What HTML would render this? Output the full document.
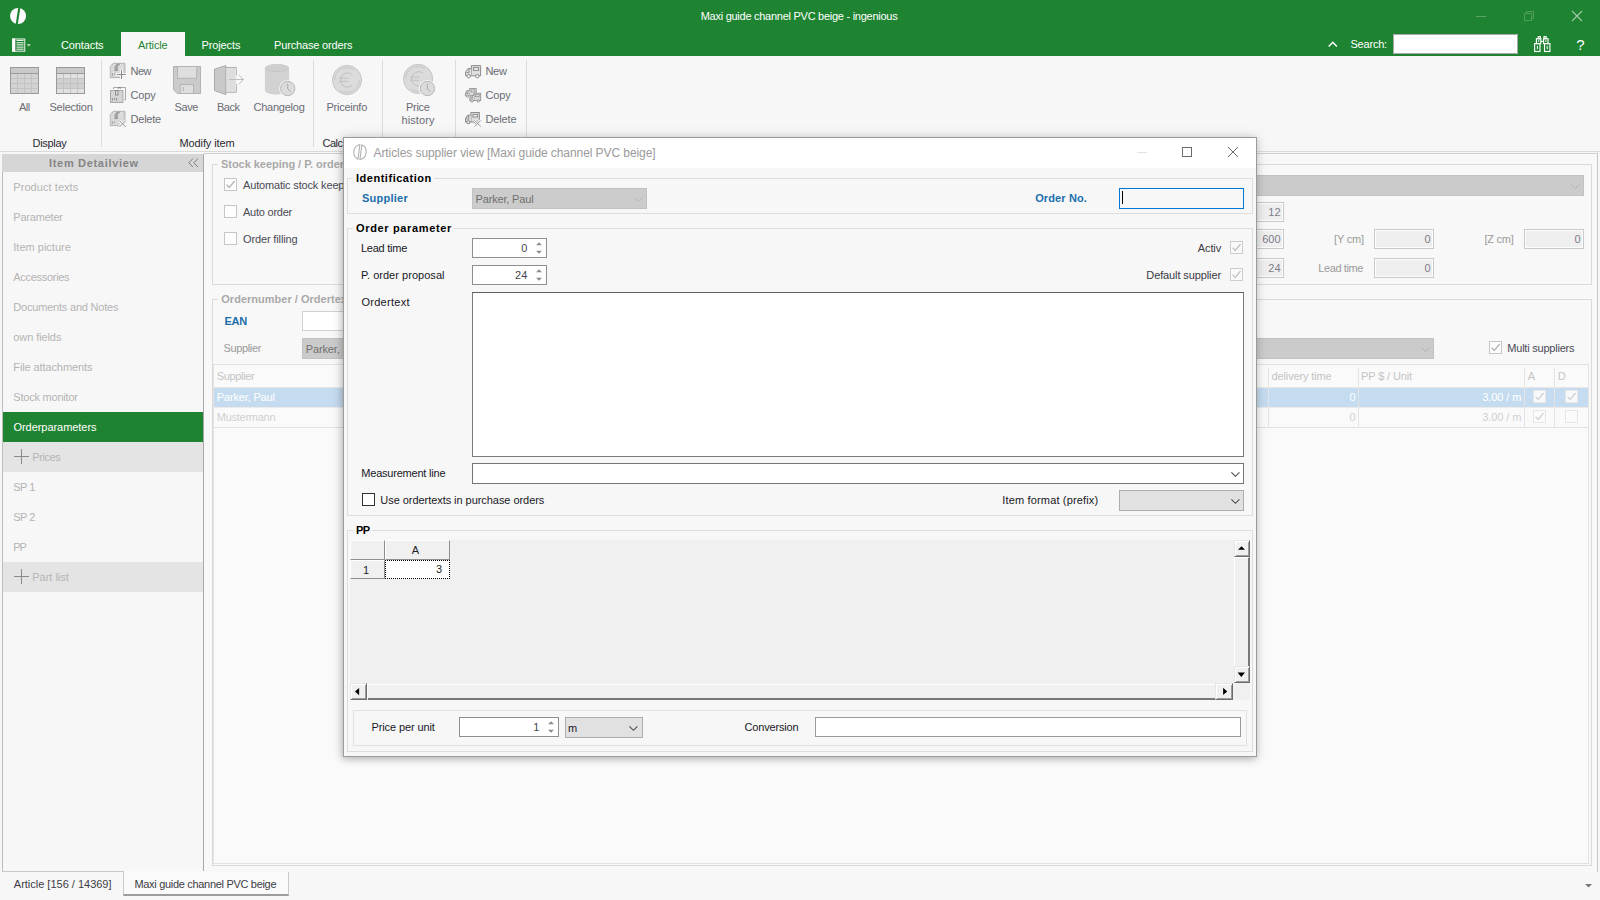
<!DOCTYPE html>
<html><head><meta charset="utf-8"><title>ingenious</title>
<style>
html,body{margin:0;padding:0;}
body{width:1600px;height:900px;overflow:hidden;position:relative;background:#f7f7f7;font-family:"Liberation Sans",sans-serif;font-size:11px;}
.a{position:absolute;box-sizing:border-box;}
.t{white-space:nowrap;}
svg{overflow:visible;}
</style></head><body>
<div class="a" style="left:0px;top:0px;width:1600px;height:56px;background:#1f8432;"></div>
<svg class="a" style="left:10px;top:8px;" width="16" height="16" viewBox="0 0 16 16"><ellipse cx="8.05" cy="8" rx="8" ry="8.05" fill="#fdfbfd"/><path d="M9.35 -0.6 L6.7 16.6" stroke="#1f8432" stroke-width="2.1"/></svg>
<div class="a t" style="left:700.70px;top:9.19px;line-height:14px;font-size:11px;color:#fff;letter-spacing:-0.265px;">Maxi guide channel PVC beige - ingenious</div>
<svg class="a" style="left:1476px;top:16px;" width="10" height="1" viewBox="0 0 10 1"><rect width="10" height="1" fill="#5aa468"/></svg>
<svg class="a" style="left:1524px;top:11px;" width="10" height="10" viewBox="0 0 10 10"><path d="M0.5 2.5h7v7h-7z M2.5 2.5v-2h7v7h-2" fill="none" stroke="#4f9e5e" stroke-width="1"/></svg>
<svg class="a" style="left:1572px;top:11px;" width="10" height="10" viewBox="0 0 10 10"><path d="M0 0L10 10M10 0L0 10" stroke="#9fcca8" stroke-width="1.1" fill="none"/></svg>
<svg class="a" style="left:12px;top:38px;" width="20" height="14" viewBox="0 0 20 14"><rect x="0.75" y="1" width="12" height="12.2" fill="none" stroke="#eef5ef" stroke-width="1"/><rect x="0.25" y="0.5" width="3.1" height="13.2" fill="#fff"/><path d="M3.9 1v12" stroke="#7d8f80" stroke-width="0.7"/><path d="M4.6 2.4h7M4.6 4.8h7M4.6 6.9h7M4.6 9.1h7M4.6 11.2h7" stroke="#fff" stroke-width="1"/><path d="M14.8 6.2h4l-2 2.2z" fill="#cfe5d3"/></svg>
<div class="a t" style="left:61.00px;top:38.19px;line-height:14px;font-size:11px;color:#fff;letter-spacing:-0.113px;">Contacts</div>
<div class="a" style="left:121px;top:32px;width:64px;height:24px;background:#f7f7f7;"></div>
<div class="a t" style="left:138.00px;top:38.19px;line-height:14px;font-size:11px;color:#1f8432;letter-spacing:-0.152px;">Article</div>
<div class="a t" style="left:201.50px;top:38.19px;line-height:14px;font-size:11px;color:#fff;letter-spacing:-0.117px;">Projects</div>
<div class="a t" style="left:274.00px;top:38.19px;line-height:14px;font-size:11px;color:#fff;letter-spacing:-0.160px;">Purchase orders</div>
<svg class="a" style="left:1328px;top:41px;" width="10" height="6" viewBox="0 0 10 6"><path d="M0.7 5.4L4.8 1.2L8.9 5.4" stroke="#fff" stroke-width="1.5" fill="none"/></svg>
<div class="a t" style="left:1350.40px;top:37.19px;line-height:14px;font-size:11px;color:#fff;letter-spacing:-0.187px;">Search:</div>
<div class="a" style="left:1393px;top:34px;width:125px;height:20px;background:#fff;border:1px solid #a9a9a9;"></div>
<svg class="a" style="left:1534px;top:36px;" width="17" height="16" viewBox="0 0 17 16"><g fill="none" stroke="#fff" stroke-width="1.15"><rect x="0.6" y="7.6" width="5.4" height="7.9"/><rect x="10.5" y="7.6" width="5.4" height="7.9"/><rect x="2.4" y="2.7" width="4.4" height="4.9"/><rect x="9.6" y="2.7" width="4.4" height="4.9"/><rect x="4.3" y="0.6" width="2.1" height="2.1"/><rect x="10" y="0.6" width="2.1" height="2.1"/><path d="M7 5.4h2.4"/><path d="M3.4 9.8v3.4M13.2 9.8v3.4M4.7 4.2v1.8M11.9 4.2v1.8" stroke-width="1"/></g></svg>
<div class="a t" style="left:1576.20px;top:35.80px;line-height:18px;font-size:15px;color:#fff;">?</div>
<div class="a" style="left:0px;top:56px;width:1600px;height:95px;background:#f7f7f7;"></div>
<div class="a" style="left:0px;top:151px;width:1600px;height:1px;background:#dadada;"></div>
<div class="a" style="left:101px;top:60px;width:1px;height:87px;background:#dcdcdc;"></div>
<div class="a" style="left:313px;top:60px;width:1px;height:87px;background:#dcdcdc;"></div>
<div class="a" style="left:382px;top:60px;width:1px;height:87px;background:#dcdcdc;"></div>
<div class="a" style="left:455px;top:60px;width:1px;height:87px;background:#dcdcdc;"></div>
<div class="a" style="left:526px;top:60px;width:1px;height:87px;background:#dcdcdc;"></div>
<div class="a t" style="left:19.00px;top:100.19px;line-height:14px;font-size:11px;color:#6b6b74;letter-spacing:-0.575px;">All</div>
<div class="a t" style="left:49.50px;top:100.19px;line-height:14px;font-size:11px;color:#6b6b74;letter-spacing:-0.250px;">Selection</div>
<div class="a t" style="left:130.50px;top:64.19px;line-height:14px;font-size:11px;color:#6b6b74;letter-spacing:-0.502px;">New</div>
<div class="a t" style="left:130.50px;top:88.19px;line-height:14px;font-size:11px;color:#6b6b74;letter-spacing:-0.170px;">Copy</div>
<div class="a t" style="left:130.50px;top:112.19px;line-height:14px;font-size:11px;color:#6b6b74;letter-spacing:-0.216px;">Delete</div>
<div class="a t" style="left:174.50px;top:100.19px;line-height:14px;font-size:11px;color:#6b6b74;letter-spacing:-0.393px;">Save</div>
<div class="a t" style="left:217.00px;top:100.19px;line-height:14px;font-size:11px;color:#6b6b74;letter-spacing:-0.489px;">Back</div>
<div class="a t" style="left:253.50px;top:100.19px;line-height:14px;font-size:11px;color:#6b6b74;letter-spacing:-0.245px;">Changelog</div>
<div class="a t" style="left:326.50px;top:100.19px;line-height:14px;font-size:11px;color:#6b6b74;letter-spacing:-0.255px;">Priceinfo</div>
<div class="a t" style="left:406.00px;top:100.19px;line-height:14px;font-size:11px;color:#6b6b74;letter-spacing:-0.312px;">Price</div>
<div class="a t" style="left:401.50px;top:113.19px;line-height:14px;font-size:11px;color:#6b6b74;letter-spacing:0.086px;">history</div>
<div class="a t" style="left:485.50px;top:64.19px;line-height:14px;font-size:11px;color:#6b6b74;letter-spacing:-0.335px;">New</div>
<div class="a t" style="left:485.50px;top:88.19px;line-height:14px;font-size:11px;color:#6b6b74;letter-spacing:-0.170px;">Copy</div>
<div class="a t" style="left:485.50px;top:112.19px;line-height:14px;font-size:11px;color:#6b6b74;letter-spacing:-0.133px;">Delete</div>
<div class="a t" style="left:32.50px;top:136.19px;line-height:14px;font-size:11px;color:#2b2b33;letter-spacing:-0.295px;">Display</div>
<div class="a t" style="left:179.50px;top:136.19px;line-height:14px;font-size:11px;color:#2b2b33;letter-spacing:-0.112px;">Modify item</div>
<div class="a t" style="left:322.50px;top:136.19px;line-height:14px;font-size:11px;color:#2b2b33;letter-spacing:-0.501px;">Calc</div>
<div class="a" style="left:2px;top:154px;width:202px;height:718px;background:#f7f7f7;border-left:1px solid #bdbdbd;border-right:1px solid #a8a8a8;"></div>
<div class="a" style="left:2px;top:154px;width:201px;height:18px;background:#d6d6d6;"></div>
<div class="a t" style="left:49.00px;top:156.19px;line-height:14px;font-size:11px;color:#858585;font-weight:bold;letter-spacing:0.682px;">Item Detailview</div>
<svg class="a" style="left:188px;top:158px;" width="11" height="10" viewBox="0 0 11 10"><path d="M5 0.5L0.8 4.8L5 9.1M10 0.5L5.8 4.8L10 9.1" stroke="#7d7d7d" stroke-width="1" fill="none"/></svg>
<div class="a t" style="left:13.30px;top:179.99px;line-height:14px;font-size:11px;color:#b4b4b4;letter-spacing:0.062px;">Product texts</div>
<div class="a t" style="left:13.30px;top:209.99px;line-height:14px;font-size:11px;color:#b4b4b4;letter-spacing:-0.205px;">Parameter</div>
<div class="a t" style="left:13.30px;top:239.99px;line-height:14px;font-size:11px;color:#b4b4b4;letter-spacing:0.003px;">Item picture</div>
<div class="a t" style="left:13.30px;top:269.99px;line-height:14px;font-size:11px;color:#b4b4b4;letter-spacing:-0.300px;">Accessories</div>
<div class="a t" style="left:13.30px;top:299.99px;line-height:14px;font-size:11px;color:#b4b4b4;letter-spacing:-0.201px;">Documents and Notes</div>
<div class="a t" style="left:13.30px;top:329.99px;line-height:14px;font-size:11px;color:#b4b4b4;letter-spacing:-0.091px;">own fields</div>
<div class="a t" style="left:13.30px;top:359.99px;line-height:14px;font-size:11px;color:#b4b4b4;letter-spacing:-0.106px;">File attachments</div>
<div class="a t" style="left:13.30px;top:389.99px;line-height:14px;font-size:11px;color:#b4b4b4;letter-spacing:-0.211px;">Stock monitor</div>
<div class="a" style="left:3px;top:412px;width:200px;height:30px;background:#1f8432;"></div>
<div class="a t" style="left:13.50px;top:419.99px;line-height:14px;font-size:11px;color:#fff;letter-spacing:-0.050px;">Orderparameters</div>
<div class="a" style="left:3px;top:442px;width:200px;height:30px;background:#e4e4e4;"></div>
<svg class="a" style="left:14px;top:449px;" width="15" height="15" viewBox="0 0 15 15"><path d="M7.5 0v15M0 7.5h15" stroke="#8a8a8a" stroke-width="1"/></svg>
<div class="a t" style="left:32.30px;top:449.99px;line-height:14px;font-size:11px;color:#b4b4b4;letter-spacing:-0.427px;">Prices</div>
<div class="a t" style="left:13.30px;top:479.99px;line-height:14px;font-size:11px;color:#b4b4b4;letter-spacing:-0.537px;">SP 1</div>
<div class="a t" style="left:13.30px;top:509.99px;line-height:14px;font-size:11px;color:#b4b4b4;letter-spacing:-0.537px;">SP 2</div>
<div class="a t" style="left:13.30px;top:539.99px;line-height:14px;font-size:11px;color:#b4b4b4;letter-spacing:-1.087px;">PP</div>
<div class="a" style="left:3px;top:562px;width:200px;height:30px;background:#e4e4e4;"></div>
<svg class="a" style="left:14px;top:569px;" width="15" height="15" viewBox="0 0 15 15"><path d="M7.5 0v15M0 7.5h15" stroke="#8a8a8a" stroke-width="1"/></svg>
<div class="a t" style="left:32.30px;top:569.99px;line-height:14px;font-size:11px;color:#b4b4b4;letter-spacing:-0.019px;">Part list</div>
<div class="a" style="left:2px;top:871px;width:122px;height:1px;background:#c9c9c9;"></div>
<div class="a" style="left:288px;top:871px;width:1310px;height:1px;background:#c9c9c9;"></div>
<div class="a t" style="left:13.80px;top:876.99px;line-height:14px;font-size:11px;color:#3c3c46;letter-spacing:-0.006px;">Article [156 / 14369]</div>
<div class="a" style="left:123px;top:871px;width:166px;height:25px;background:#fafafa;border-left:1px solid #c9c9c9;border-right:1px solid #c9c9c9;border-bottom:2px solid #9c9c9c;"></div>
<div class="a t" style="left:134.40px;top:876.99px;line-height:14px;font-size:11px;color:#3c3c46;letter-spacing:-0.308px;">Maxi guide channel PVC beige</div>
<svg class="a" style="left:1585px;top:884px;" width="7" height="4" viewBox="0 0 7 4"><path d="M0 0h7l-3.5 3.6z" fill="#777"/></svg>
<div class="a" style="left:204px;top:153px;width:1394px;height:719px;background:#f8f8f8;border-top:1px solid #d0d0d0;border-right:1px solid #c6c6c6;"></div>
<div class="a" style="left:212px;top:164px;width:1380px;height:121px;border:1px solid #dadada;"></div>
<div class="a" style="left:218px;top:160px;width:130px;height:10px;background:#f8f8f8;"></div>
<div class="a t" style="left:221.00px;top:157.19px;line-height:14px;font-size:11px;color:#a9a9a9;font-weight:bold;letter-spacing:-0.037px;">Stock keeping / P. order</div>
<div class="a" style="left:224px;top:178px;width:13px;height:13px;background:#fdfdfd;border:1px solid #c6c6c6;"><svg width="13" height="13" viewBox="0 0 13 13" style="position:absolute;left:-1px;top:-1px"><path d="M2.6 6.6L5.2 9.4L10.6 3" stroke="#b5b5b5" stroke-width="1.3" fill="none"/></svg></div>
<div class="a t" style="left:243.00px;top:177.99px;line-height:14px;font-size:11px;color:#4a4a55;letter-spacing:-0.162px;">Automatic stock keeping</div>
<div class="a" style="left:224px;top:205px;width:13px;height:13px;background:#fdfdfd;border:1px solid #c6c6c6;"></div>
<div class="a t" style="left:243.00px;top:204.99px;line-height:14px;font-size:11px;color:#4a4a55;letter-spacing:-0.236px;">Auto order</div>
<div class="a" style="left:224px;top:232px;width:13px;height:13px;background:#fdfdfd;border:1px solid #c6c6c6;"></div>
<div class="a t" style="left:243.00px;top:231.99px;line-height:14px;font-size:11px;color:#4a4a55;letter-spacing:-0.134px;">Order filling</div>
<div class="a" style="left:1000px;top:175px;width:584px;height:21px;background:#cbcbcb;border:1px solid #c2c2c2;"></div>
<svg class="a" style="left:1571px;top:184px;" width="9" height="5" viewBox="0 0 9 5"><path d="M0.4 0.4L4.4 4.4L8.4 0.4" stroke="#b4b4b4" stroke-width="1" fill="none"/></svg>
<div class="a" style="left:1224px;top:202px;width:60px;height:20px;background:#efefef;border:1px solid #c9c9c9;box-shadow:inset 0 0 0 1px #fdfdfd;"></div>
<div class="a t" style="left:1268.27px;top:205.19px;line-height:14px;font-size:11px;color:#7d7d88;">12</div>
<div class="a" style="left:1224px;top:229px;width:60px;height:20px;background:#efefef;border:1px solid #c9c9c9;box-shadow:inset 0 0 0 1px #fdfdfd;"></div>
<div class="a t" style="left:1262.15px;top:232.19px;line-height:14px;font-size:11px;color:#7d7d88;">600</div>
<div class="a" style="left:1224px;top:258px;width:60px;height:20px;background:#efefef;border:1px solid #c9c9c9;box-shadow:inset 0 0 0 1px #fdfdfd;"></div>
<div class="a t" style="left:1268.27px;top:261.19px;line-height:14px;font-size:11px;color:#7d7d88;">24</div>
<div class="a t" style="left:1334.00px;top:232.49px;line-height:14px;font-size:11px;color:#9a9a9a;letter-spacing:-0.161px;">[Y cm]</div>
<div class="a" style="left:1374px;top:229px;width:60px;height:20px;background:#efefef;border:1px solid #c9c9c9;box-shadow:inset 0 0 0 1px #fdfdfd;"></div>
<div class="a t" style="left:1424.38px;top:232.19px;line-height:14px;font-size:11px;color:#7d7d88;">0</div>
<div class="a t" style="left:1484.50px;top:232.49px;line-height:14px;font-size:11px;color:#9a9a9a;letter-spacing:-0.258px;">[Z cm]</div>
<div class="a" style="left:1524px;top:229px;width:60px;height:20px;background:#efefef;border:1px solid #c9c9c9;box-shadow:inset 0 0 0 1px #fdfdfd;"></div>
<div class="a t" style="left:1574.38px;top:232.19px;line-height:14px;font-size:11px;color:#7d7d88;">0</div>
<div class="a t" style="left:1318.30px;top:261.49px;line-height:14px;font-size:11px;color:#9a9a9a;letter-spacing:-0.400px;">Lead time</div>
<div class="a" style="left:1374px;top:258px;width:60px;height:20px;background:#efefef;border:1px solid #c9c9c9;box-shadow:inset 0 0 0 1px #fdfdfd;"></div>
<div class="a t" style="left:1424.38px;top:261.19px;line-height:14px;font-size:11px;color:#7d7d88;">0</div>
<div class="a" style="left:212px;top:299px;width:1380px;height:567px;border:1px solid #dadada;"></div>
<div class="a" style="left:218px;top:295px;width:132px;height:10px;background:#f8f8f8;"></div>
<div class="a t" style="left:221.30px;top:291.99px;line-height:14px;font-size:11px;color:#a9a9a9;font-weight:bold;letter-spacing:0.014px;">Ordernumber / Ordertext</div>
<div class="a t" style="left:224.50px;top:313.69px;line-height:14px;font-size:11px;color:#1b6ea8;font-weight:bold;letter-spacing:-0.308px;">EAN</div>
<div class="a" style="left:302px;top:311px;width:200px;height:20px;background:#fff;border:1px solid #d2d2d2;"></div>
<div class="a t" style="left:223.50px;top:340.99px;line-height:14px;font-size:11px;color:#9a9a9a;letter-spacing:-0.357px;">Supplier</div>
<div class="a" style="left:302px;top:338px;width:1132px;height:21px;background:#cbcbcb;border:1px solid #c2c2c2;"></div>
<div class="a t" style="left:305.80px;top:341.99px;line-height:14px;font-size:11px;color:#707070;letter-spacing:-0.160px;">Parker, Paul</div>
<svg class="a" style="left:1421px;top:347px;" width="9" height="5" viewBox="0 0 9 5"><path d="M0.4 0.4L4.4 4.4L8.4 0.4" stroke="#b4b4b4" stroke-width="1" fill="none"/></svg>
<div class="a" style="left:1489px;top:341px;width:13px;height:13px;background:#fdfdfd;border:1px solid #c6c6c6;"><svg width="13" height="13" viewBox="0 0 13 13" style="position:absolute;left:-1px;top:-1px"><path d="M2.6 6.6L5.2 9.4L10.6 3" stroke="#b5b5b5" stroke-width="1.3" fill="none"/></svg></div>
<div class="a t" style="left:1507.30px;top:341.19px;line-height:14px;font-size:11px;color:#4a4a55;letter-spacing:-0.220px;">Multi suppliers</div>
<div class="a" style="left:213px;top:364px;width:1376px;height:500px;background:#fafafa;border:1px solid #e2e2e2;"></div>
<div class="a" style="left:214px;top:388px;width:1374px;height:19px;background:#c5dcf0;"></div>
<div class="a" style="left:214px;top:427px;width:1374px;height:1px;background:#e2e2e2;"></div>
<div class="a" style="left:214px;top:387px;width:1374px;height:1px;background:#ebe6e6;"></div>
<div class="a" style="left:214px;top:407px;width:1374px;height:1px;background:#efeaea;"></div>
<div class="a t" style="left:216.80px;top:368.69px;line-height:14px;font-size:11px;color:#c4c4c4;letter-spacing:-0.357px;">Supplier</div>
<div class="a t" style="left:216.80px;top:390.19px;line-height:14px;font-size:11px;color:#fff;letter-spacing:-0.160px;">Parker, Paul</div>
<div class="a t" style="left:216.80px;top:409.99px;line-height:14px;font-size:11px;color:#d0d0d0;letter-spacing:-0.263px;">Mustermann</div>
<div class="a" style="left:1268px;top:368px;width:1px;height:60px;background:#e4e4e4;"></div>
<div class="a" style="left:1358px;top:368px;width:1px;height:60px;background:#e4e4e4;"></div>
<div class="a" style="left:1524px;top:368px;width:1px;height:60px;background:#e4e4e4;"></div>
<div class="a" style="left:1554px;top:368px;width:1px;height:60px;background:#e4e4e4;"></div>
<div class="a t" style="left:1271.60px;top:368.69px;line-height:14px;font-size:11px;color:#c4c4c4;letter-spacing:-0.134px;">delivery time</div>
<div class="a t" style="left:1361.00px;top:368.69px;line-height:14px;font-size:11px;color:#c4c4c4;letter-spacing:-0.125px;">PP $ / Unit</div>
<div class="a t" style="left:1527.80px;top:368.69px;line-height:14px;font-size:11px;color:#c4c4c4;">A</div>
<div class="a t" style="left:1557.80px;top:368.69px;line-height:14px;font-size:11px;color:#c4c4c4;">D</div>
<div class="a t" style="left:1349.38px;top:390.19px;line-height:14px;font-size:11px;color:#fff;">0</div>
<div class="a t" style="left:1349.38px;top:409.99px;line-height:14px;font-size:11px;color:#d0d0d0;">0</div>
<div class="a t" style="left:1482.30px;top:390.19px;line-height:14px;font-size:11px;color:#fff;letter-spacing:-0.092px;">3.00 / m</div>
<div class="a t" style="left:1482.30px;top:409.99px;line-height:14px;font-size:11px;color:#d0d0d0;letter-spacing:-0.092px;">3.00 / m</div>
<div class="a" style="left:1533px;top:390px;width:13px;height:13px;background:#f7f9fb;border:1px solid #e6e6e6;"><svg width="13" height="13" viewBox="0 0 13 13" style="position:absolute;left:-1px;top:-1px"><path d="M2.6 6.6L5.2 9.4L10.6 3" stroke="#d0d0d0" stroke-width="1.3" fill="none"/></svg></div>
<div class="a" style="left:1565px;top:390px;width:13px;height:13px;background:#f7f9fb;border:1px solid #e6e6e6;"><svg width="13" height="13" viewBox="0 0 13 13" style="position:absolute;left:-1px;top:-1px"><path d="M2.6 6.6L5.2 9.4L10.6 3" stroke="#d0d0d0" stroke-width="1.3" fill="none"/></svg></div>
<div class="a" style="left:1533px;top:410px;width:13px;height:13px;background:#fbfbfb;border:1px solid #e6e6e6;"><svg width="13" height="13" viewBox="0 0 13 13" style="position:absolute;left:-1px;top:-1px"><path d="M2.6 6.6L5.2 9.4L10.6 3" stroke="#d4d4d4" stroke-width="1.3" fill="none"/></svg></div>
<div class="a" style="left:1565px;top:410px;width:13px;height:13px;background:#fbfbfb;border:1px solid #e6e6e6;"></div>
<div class="a" style="left:343px;top:137px;width:914px;height:620px;background:#f7f7f7;border:1px solid #9b9b9b;box-shadow:-1px 2px 7px rgba(0,0,0,0.24), 0 0 13px 1px rgba(0,0,0,0.09);"></div>
<div class="a" style="left:344px;top:138px;width:912px;height:30px;background:#fff;"></div>
<svg class="a" style="left:352px;top:144px;" width="16" height="16" viewBox="0 0 16 16"><g fill="#fff" stroke="#b2b2b2" stroke-width="1.1" stroke-linejoin="round"><path d="M7.9 0.5A7.9 7.9 0 0 0 6 15.2Z"/><path d="M9.9 0.8A7.9 7.9 0 0 1 7.9 15.6Z"/></g></svg>
<div class="a t" style="left:373.50px;top:145.94px;line-height:15px;font-size:12px;color:#9a9a9a;letter-spacing:-0.078px;">Articles supplier view [Maxi guide channel PVC beige]</div>
<svg class="a" style="left:1137px;top:152px;" width="10" height="1" viewBox="0 0 10 1"><rect width="10" height="1" fill="#e3e3e3"/></svg>
<svg class="a" style="left:1182px;top:147px;" width="10" height="10" viewBox="0 0 10 10"><rect x="0.5" y="0.5" width="9" height="9" fill="none" stroke="#6a6a6a" stroke-width="1"/></svg>
<svg class="a" style="left:1228px;top:147px;" width="10" height="10" viewBox="0 0 10 10"><path d="M0 0L10 10M10 0L0 10" stroke="#6a6a6a" stroke-width="1" fill="none"/></svg>
<div class="a" style="left:347px;top:178px;width:906px;height:36px;border:1px solid #dddddd;"></div>
<div class="a" style="left:353px;top:173px;width:80.7px;height:10px;background:#f7f7f7;"></div>
<div class="a t" style="left:356.00px;top:170.79px;line-height:14px;font-size:11px;color:#000;font-weight:bold;letter-spacing:0.519px;">Identification</div>
<div class="a t" style="left:362.00px;top:190.69px;line-height:14px;font-size:11px;color:#1b6fab;font-weight:bold;letter-spacing:0.250px;">Supplier</div>
<div class="a" style="left:472px;top:188px;width:175px;height:21px;background:#cccccc;border:1px solid #c1c1c1;"></div>
<div class="a t" style="left:475.50px;top:191.79px;line-height:14px;font-size:11px;color:#6e6e6e;letter-spacing:-0.160px;">Parker, Paul</div>
<svg class="a" style="left:634px;top:197px;" width="9" height="5" viewBox="0 0 9 5"><path d="M0.4 0.4L4.4 4.4L8.4 0.4" stroke="#b6b6b6" stroke-width="1" fill="none"/></svg>
<div class="a t" style="left:1035.20px;top:191.19px;line-height:14px;font-size:11px;color:#1b6fab;font-weight:bold;letter-spacing:0.119px;">Order No.</div>
<div class="a" style="left:1119px;top:188px;width:125px;height:21px;background:#f7f7f7;border:1px solid #0078d7;"></div>
<div class="a" style="left:1122px;top:191px;width:1px;height:13px;background:#000;"></div>
<div class="a" style="left:347px;top:228px;width:906px;height:288px;border:1px solid #dddddd;"></div>
<div class="a" style="left:353px;top:223px;width:101px;height:10px;background:#f7f7f7;"></div>
<div class="a t" style="left:356.00px;top:220.79px;line-height:14px;font-size:11px;color:#000;font-weight:bold;letter-spacing:0.653px;">Order parameter</div>
<div class="a t" style="left:361.00px;top:240.89px;line-height:14px;font-size:11px;color:#17171f;letter-spacing:-0.256px;">Lead time</div>
<div class="a" style="left:472px;top:238px;width:75px;height:20px;background:#fff;border:1px solid #8e8e8e;"></div>
<div class="a t" style="left:521.18px;top:240.79px;line-height:14px;font-size:11px;color:#44444c;">0</div>
<svg class="a" style="left:536px;top:242px;" width="6" height="12" viewBox="0 0 6 12"><path d="M0 3.2L3 0.2L6 3.2z M0 8.8L3 11.8L6 8.8z" fill="#8c8c8c"/></svg>
<div class="a t" style="left:361.00px;top:267.79px;line-height:14px;font-size:11px;color:#17171f;letter-spacing:0.032px;">P. order proposal</div>
<div class="a" style="left:472px;top:265px;width:75px;height:20px;background:#fff;border:1px solid #8e8e8e;"></div>
<div class="a t" style="left:515.07px;top:267.79px;line-height:14px;font-size:11px;color:#44444c;">24</div>
<svg class="a" style="left:536px;top:269px;" width="6" height="12" viewBox="0 0 6 12"><path d="M0 3.2L3 0.2L6 3.2z M0 8.8L3 11.8L6 8.8z" fill="#8c8c8c"/></svg>
<div class="a t" style="left:361.50px;top:294.99px;line-height:14px;font-size:11px;color:#17171f;letter-spacing:0.262px;">Ordertext</div>
<div class="a t" style="left:1197.80px;top:240.79px;line-height:14px;font-size:11px;color:#3a3a44;letter-spacing:-0.127px;">Activ</div>
<div class="a" style="left:1230px;top:241px;width:13px;height:13px;background:#fafafa;border:1px solid #cdcdcd;"><svg width="13" height="13" viewBox="0 0 13 13" style="position:absolute;left:-1px;top:-1px"><path d="M2.6 6.6L5.2 9.4L10.6 3" stroke="#c2c2c2" stroke-width="1.3" fill="none"/></svg></div>
<div class="a t" style="left:1146.30px;top:267.79px;line-height:14px;font-size:11px;color:#3a3a44;letter-spacing:-0.108px;">Default supplier</div>
<div class="a" style="left:1230px;top:268px;width:13px;height:13px;background:#fafafa;border:1px solid #cdcdcd;"><svg width="13" height="13" viewBox="0 0 13 13" style="position:absolute;left:-1px;top:-1px"><path d="M2.6 6.6L5.2 9.4L10.6 3" stroke="#c2c2c2" stroke-width="1.3" fill="none"/></svg></div>
<div class="a" style="left:472px;top:292px;width:772px;height:165px;background:#fff;border:1px solid #7a7a7a;border-top-color:#5f5f5f;"></div>
<div class="a t" style="left:361.30px;top:465.99px;line-height:14px;font-size:11px;color:#17171f;letter-spacing:-0.214px;">Measurement line</div>
<div class="a" style="left:472px;top:463px;width:772px;height:21px;background:#fff;border:1px solid #747474;"></div>
<svg class="a" style="left:1231px;top:472px;" width="9" height="5" viewBox="0 0 9 5"><path d="M0.4 0.3L4.4 4.3L8.4 0.3" stroke="#4a4a4a" stroke-width="1.1" fill="none"/></svg>
<div class="a" style="left:362px;top:493px;width:13px;height:13px;background:#fff;border:1px solid #333;"></div>
<div class="a t" style="left:380.30px;top:492.99px;line-height:14px;font-size:11px;color:#17171f;letter-spacing:-0.051px;">Use ordertexts in purchase orders</div>
<div class="a t" style="left:1002.30px;top:492.99px;line-height:14px;font-size:11px;color:#17171f;letter-spacing:0.155px;">Item format (prefix)</div>
<div class="a" style="left:1119px;top:490px;width:125px;height:21px;background:#e1e1e1;border:1px solid #adadad;"></div>
<svg class="a" style="left:1231px;top:499px;" width="9" height="5" viewBox="0 0 9 5"><path d="M0.4 0.3L4.4 4.3L8.4 0.3" stroke="#4a4a4a" stroke-width="1.1" fill="none"/></svg>
<div class="a" style="left:347px;top:530px;width:906px;height:222px;border:1px solid #dddddd;"></div>
<div class="a" style="left:353px;top:525px;width:18.5px;height:10px;background:#f7f7f7;"></div>
<div class="a t" style="left:356.00px;top:522.79px;line-height:14px;font-size:11px;color:#000;font-weight:bold;letter-spacing:-0.587px;">PP</div>
<div class="a" style="left:350px;top:540px;width:900px;height:160px;background:#f0f0f0;"></div>
<div class="a" style="left:350px;top:540px;width:35px;height:20px;background:#f0f0f0;border-top:1px solid #fff;border-left:1px solid #fff;border-right:1px solid #8e8e8e;border-bottom:1px solid #8e8e8e;"></div>
<div class="a" style="left:385px;top:540px;width:65px;height:20px;background:#f0f0f0;border-top:1px solid #fff;border-left:1px solid #fff;border-right:1px solid #8e8e8e;border-bottom:1px solid #8e8e8e;"></div>
<div class="a" style="left:350px;top:560px;width:35px;height:19px;background:#f0f0f0;border-top:1px solid #fff;border-left:1px solid #fff;border-right:1px solid #8e8e8e;border-bottom:1px solid #8e8e8e;"></div>
<div class="a" style="left:385px;top:560px;width:65px;height:19px;background:#fff;border:1px dotted #000;"></div>
<div class="a t" style="left:411.73px;top:542.89px;line-height:14px;font-size:11px;color:#1e1e26;">A</div>
<div class="a t" style="left:362.94px;top:562.99px;line-height:14px;font-size:11px;color:#1e1e26;">1</div>
<div class="a t" style="left:436.08px;top:562.09px;line-height:14px;font-size:11px;color:#1e1e26;">3</div>
<div class="a" style="left:1234px;top:540px;width:16px;height:17px;background:#f0f0f0;border-top:1px solid #e6e6e6;border-left:1px solid #e6e6e6;border-right:1px solid #6b6b6b;border-bottom:1px solid #6b6b6b;box-shadow:inset 1px 1px 0 #fff, inset -1px -1px 0 #9d9d9d;"><svg width="14" height="15" style="position:absolute;left:0;top:0" viewBox="0 0 14 15"><path d="M3 8.8L10 8.8L6.5 5.2z" fill="#000"/></svg></div>
<div class="a" style="left:1234px;top:557px;width:16px;height:109px;background:#f0f0f0;border-left:1px solid #fff;border-top:1px solid #fff;border-right:2px solid #787878;"></div>
<div class="a" style="left:1234px;top:666px;width:16px;height:17px;background:#f0f0f0;border-top:1px solid #e6e6e6;border-left:1px solid #e6e6e6;border-right:1px solid #6b6b6b;border-bottom:1px solid #6b6b6b;box-shadow:inset 1px 1px 0 #fff, inset -1px -1px 0 #9d9d9d;"><svg width="14" height="15" style="position:absolute;left:0;top:0" viewBox="0 0 14 15"><path d="M2.6 5.5L10 5.5L6.3 9.9z" fill="#000"/></svg></div>
<div class="a" style="left:350px;top:683px;width:17px;height:17px;background:#f0f0f0;border-top:1px solid #e6e6e6;border-left:1px solid #e6e6e6;border-right:1px solid #6b6b6b;border-bottom:1px solid #6b6b6b;box-shadow:inset 1px 1px 0 #fff, inset -1px -1px 0 #9d9d9d;"><svg width="15" height="15" style="position:absolute;left:0;top:0" viewBox="0 0 15 15"><path d="M8.1 4L8.1 11.2L4 7.6z" fill="#000"/></svg></div>
<div class="a" style="left:367px;top:684px;width:848px;height:16px;background:#f0f0f0;border-top:1px solid #fff;border-left:1px solid #fafafa;border-bottom:2px solid #787878;"></div>
<div class="a" style="left:367px;top:698px;width:1px;height:2px;background:#f4f4f4;"></div>
<div class="a" style="left:1215px;top:683px;width:18px;height:17px;background:#f0f0f0;border-top:1px solid #e6e6e6;border-left:1px solid #e6e6e6;border-right:1px solid #6b6b6b;border-bottom:1px solid #6b6b6b;box-shadow:inset 1px 1px 0 #fff, inset -1px -1px 0 #9d9d9d;"><svg width="16" height="15" style="position:absolute;left:0;top:0" viewBox="0 0 16 15"><path d="M7.1 3.8L7.1 11L11.2 7.4z" fill="#000"/></svg></div>
<div class="a" style="left:353px;top:710px;width:894px;height:36px;border:1px solid #e1e1e1;"></div>
<div class="a t" style="left:371.50px;top:720.19px;line-height:14px;font-size:11px;color:#17171f;letter-spacing:-0.107px;">Price per unit</div>
<div class="a" style="left:459px;top:717px;width:100px;height:20px;background:#fff;border:1px solid #8e8e8e;"></div>
<div class="a t" style="left:533.18px;top:719.79px;line-height:14px;font-size:11px;color:#44444c;">1</div>
<svg class="a" style="left:548px;top:721px;" width="6" height="12" viewBox="0 0 6 12"><path d="M0 3.2L3 0.2L6 3.2z M0 8.8L3 11.8L6 8.8z" fill="#8c8c8c"/></svg>
<div class="a" style="left:565px;top:717px;width:78px;height:21px;background:#e1e1e1;border:1px solid #adadad;"></div>
<div class="a t" style="left:568.00px;top:720.69px;line-height:14px;font-size:11px;color:#17171f;">m</div>
<svg class="a" style="left:629px;top:726px;" width="9" height="5" viewBox="0 0 9 5"><path d="M0.4 0.3L4.4 4.3L8.4 0.3" stroke="#4a4a4a" stroke-width="1.1" fill="none"/></svg>
<div class="a t" style="left:744.50px;top:720.19px;line-height:14px;font-size:11px;color:#17171f;letter-spacing:-0.164px;">Conversion</div>
<div class="a" style="left:815px;top:717px;width:426px;height:20px;background:#fff;border:1px solid #9a9a9a;"></div>
<svg class="a" style="left:10px;top:67px;" width="29" height="27" viewBox="0 0 29 27"><rect x="0.5" y="0.5" width="28" height="26" fill="#d3d3d3" stroke="#9a9a9a"/><rect x="1" y="1" width="27" height="5" fill="#c9c9c9"/><path d="M1 6.5h27" stroke="#9a9a9a"/><path d="M7.5 7v19.5M14.5 7v19.5M21.5 7v19.5M1 11.5h27M1 16.5h27M1 21.5h27" stroke="#c2c2c2" stroke-width="1" fill="none"/><rect x="0.5" y="0.5" width="28" height="26" fill="none" stroke="#9a9a9a"/></svg>
<svg class="a" style="left:56px;top:67px;" width="29" height="27" viewBox="0 0 29 27"><rect x="0.5" y="0.5" width="28" height="26" fill="#d3d3d3" stroke="#9a9a9a"/><rect x="1" y="7" width="27" height="4.6" fill="#e1e1e1"/><rect x="1" y="21.5" width="27" height="5" fill="#e1e1e1"/><rect x="1" y="11.6" width="27" height="9.9" fill="#d0d0d0"/><rect x="1" y="1" width="27" height="5" fill="#c9c9c9"/><path d="M1 6.5h27" stroke="#9a9a9a"/><path d="M7.5 7v19.5M14.5 7v19.5M21.5 7v19.5M1 11.5h27M1 16.5h27M1 21.5h27" stroke="#c2c2c2" stroke-width="1" fill="none"/><rect x="0.5" y="0.5" width="28" height="26" fill="none" stroke="#9a9a9a"/></svg>
<svg class="a" style="left:110px;top:63px;" width="16" height="16" viewBox="0 0 16 16"><path d="M0.3 3.4L3.2 0.3H15L12.7 3.4z" fill="#cbcbcb"/><path d="M12.7 3.4L15 0.3V12L12.7 14.7z" fill="#d2d2d2"/><path d="M2.2 2.7L4.2 1H6.6L4.8 2.7zM8.8 2.7L10.4 1H13.2L11.6 2.7z" fill="#e6e6e6"/><rect x="0.3" y="3.4" width="12.4" height="11.3" fill="#d9d9d9"/><path d="M7.2 0.3H11L7.8 3.5V7.8H4.5V3.5z" fill="#a2a2a2"/><path d="M4.6 7.4h3.1" stroke="#8a8a8a" stroke-width="0.8"/><path d="M0.3 14.7V3.4L3.2 0.3H15V12" fill="none" stroke="#adadad" stroke-width="0.8"/><path d="M0.3 14.6H12.7" stroke="#ababab" stroke-width="0.9"/><path d="M2.4 10.3v2.7M4.5 10.3v1.6" stroke="#999" stroke-width="0.9"/><path d="M11.5 6.4v10.2M6.3 11.5h10.3" stroke="#f7f7f7" stroke-width="3"/><path d="M11.5 7.1v8.9M7 11.5h9" stroke="#8a8a8a" stroke-width="1"/></svg>
<svg class="a" style="left:110px;top:87px;" width="16" height="16" viewBox="0 0 16 16"><path d="M3.5 2v-1.5h12v12.3h-1.6" fill="none" stroke="#a8a8a8"/><path d="M8.3 0.6v1.2M10.3 0.6v1.2M8.2 0.5h2.3" fill="none" stroke="#7d7d7d" stroke-width="0.9"/><rect x="-0.6" y="2.4" width="14.7" height="14.2" fill="#f7f7f7"/><rect x="0.5" y="3.5" width="12.4" height="12" fill="#d5d5d5" stroke="#a9a9a9"/><rect x="5.55" y="3.6" width="2.5" height="4.4" fill="#dedede" stroke="#888" stroke-width="0.95"/><path d="M2.4 11v2.8M4.5 11v1.7M6.5 11v2.8" stroke="#8a8a8a" stroke-width="0.95"/></svg>
<svg class="a" style="left:110px;top:111px;" width="16" height="16" viewBox="0 0 16 16"><path d="M0.3 3.4L3.2 0.3H15L12.7 3.4z" fill="#cbcbcb"/><path d="M12.7 3.4L15 0.3V12L12.7 14.7z" fill="#d2d2d2"/><path d="M2.2 2.7L4.2 1H6.6L4.8 2.7zM8.8 2.7L10.4 1H13.2L11.6 2.7z" fill="#e6e6e6"/><rect x="0.3" y="3.4" width="12.4" height="11.3" fill="#d9d9d9"/><path d="M7.2 0.3H11L7.8 3.5V7.8H4.5V3.5z" fill="#a2a2a2"/><path d="M4.6 7.4h3.1" stroke="#8a8a8a" stroke-width="0.8"/><path d="M0.3 14.7V3.4L3.2 0.3H15V12" fill="none" stroke="#adadad" stroke-width="0.8"/><path d="M0.3 14.6H12.7" stroke="#ababab" stroke-width="0.9"/><path d="M2.4 10.3v2.7M4.5 10.3v1.6" stroke="#999" stroke-width="0.9"/><path d="M9.4 9.6l6.4 6.4M15.8 9.6l-6.4 6.4" stroke="#f7f7f7" stroke-width="2.6"/><path d="M9.4 9.6l6.4 6.4M15.8 9.6l-6.4 6.4" stroke="#8a8a8a" stroke-width="0.9"/></svg>
<svg class="a" style="left:173px;top:66px;" width="28" height="28" viewBox="0 0 28 28"><path d="M0.5 0.5h27v27h-23.2l-3.8 -3.6z" fill="#cbcbcb" stroke="#b3b3b3"/><rect x="4.5" y="0.5" width="19.2" height="11.8" fill="#dedede" stroke="#b3b3b3"/><rect x="7.3" y="18.6" width="13.2" height="8.9" fill="#dedede" stroke="#b3b3b3"/><path d="M10.3 21v3.8" stroke="#b0b0b0" stroke-width="1"/></svg>
<svg class="a" style="left:214px;top:65px;" width="30" height="30" viewBox="0 0 30 30"><path d="M12 2.5h10.3v7.8M22.3 19v8.3h-10.3" fill="none" stroke="#aeaeae" stroke-width="1"/><path d="M12.5 3h9.3v24h-9.3z" fill="#dedede"/><path d="M0.5 4.2L11.8 0.6v29L0.5 25.6z" fill="#c9c9c9" stroke="#a9a9a9" stroke-width="1"/><path d="M15 14.5h14.3M24.8 10l4.8 4.5l-4.8 4.6" fill="none" stroke="#bdbdbd" stroke-width="1"/></svg>
<svg class="a" style="left:265px;top:64px;" width="31" height="33" viewBox="0 0 31 33"><path d="M0.4 4v22.5c0 2 5.2 3.6 11.6 3.6s11.6-1.6 11.6-3.6V4z" fill="#d2d2d2" stroke="#c4c4c4" stroke-width="0.6"/><ellipse cx="12" cy="4" rx="11.6" ry="3.6" fill="#cfcfcf" stroke="#c0c0c0" stroke-width="0.7"/><circle cx="22.7" cy="24.5" r="8.6" fill="#f7f7f7"/><circle cx="22.7" cy="24.5" r="7.2" fill="#dbdbdb" stroke="#b1b1b1" stroke-width="0.9"/><path d="M22.7 19.5v5.2l2.9 3.2" fill="none" stroke="#a5a5a5" stroke-width="0.9"/></svg>
<svg class="a" style="left:332px;top:65px;" width="30" height="30" viewBox="0 0 30 30"><circle cx="15" cy="15" r="14.6" fill="#dbdbdb" stroke="#c2c2c2" stroke-width="0.9"/><path d="M2.7 15a12.3 12.3 0 0 1 19.25 -10.15" fill="none" stroke="#c2c2c2" stroke-width="0.8"/><path d="M27.3 15.4a12.3 12.3 0 0 1 -19.2 9.8" fill="none" stroke="#c2c2c2" stroke-width="0.8"/><path d="M19.8 9.3a7 7.2 0 1 0 0 11.4" fill="none" stroke="#bfbfbf" stroke-width="1"/><path d="M7 13.2h9M7 16.4h9" stroke="#bfbfbf" stroke-width="0.9"/></svg>
<svg class="a" style="left:403px;top:64px;" width="33" height="33" viewBox="0 0 33 33"><circle cx="15.1" cy="14.9" r="14.6" fill="#dbdbdb" stroke="#c2c2c2" stroke-width="0.9"/><path d="M2.8 14.9a12.3 12.3 0 0 1 19.25 -10.15" fill="none" stroke="#c2c2c2" stroke-width="0.8"/><path d="M27.4 15.3a12.3 12.3 0 0 1 -19.2 9.8" fill="none" stroke="#c2c2c2" stroke-width="0.8"/><path d="M19.9 9.2a7 7.2 0 1 0 0 11.4" fill="none" stroke="#bfbfbf" stroke-width="1"/><path d="M7.1 13.1h9M7.1 16.3h9" stroke="#bfbfbf" stroke-width="0.9"/><circle cx="24.4" cy="24.5" r="8.6" fill="#f7f7f7"/><circle cx="24.4" cy="24.5" r="7.2" fill="#dbdbdb" stroke="#b1b1b1" stroke-width="0.9"/><path d="M24.4 19.5v5.2l2.9 3.2" fill="none" stroke="#a5a5a5" stroke-width="0.9"/></svg>
<svg class="a" style="left:465px;top:65px;" width="16" height="14" viewBox="0 0 16 14"><g transform="translate(0 0) scale(1)" fill="#dedede" stroke="#8c8c8c" stroke-width="1"><path d="M6.4 0.6h9.2v10.2h-9.2z"/><path d="M6.4 3.6h-3.4l-2.4 3.4v3.8h5.8"/><path d="M1.5 7.5h2.5v-3.4" fill="none"/><rect x="8.6" y="2.6" width="5" height="2.8" fill="#f2f2f2"/><circle cx="3.6" cy="11.2" r="1.7" fill="#f4f4f4"/><circle cx="12.3" cy="11.2" r="1.7" fill="#f4f4f4"/></g></svg>
<svg class="a" style="left:465px;top:88px;" width="16" height="15" viewBox="0 0 16 15"><g transform="translate(0 0) scale(0.72)" fill="#dedede" stroke="#a0a0a0" stroke-width="1.38889"><path d="M6.4 0.6h9.2v10.2h-9.2z"/><path d="M6.4 3.6h-3.4l-2.4 3.4v3.8h5.8"/><path d="M1.5 7.5h2.5v-3.4" fill="none"/><rect x="8.6" y="2.6" width="5" height="2.8" fill="#f2f2f2"/><circle cx="3.6" cy="11.2" r="1.7" fill="#f4f4f4"/><circle cx="12.3" cy="11.2" r="1.7" fill="#f4f4f4"/></g><g transform="translate(4.4 4.8) scale(0.72)" fill="#dedede" stroke="#9a9a9a" stroke-width="1.38889"><path d="M6.4 0.6h9.2v10.2h-9.2z"/><path d="M6.4 3.6h-3.4l-2.4 3.4v3.8h5.8"/><path d="M1.5 7.5h2.5v-3.4" fill="none"/><rect x="8.6" y="2.6" width="5" height="2.8" fill="#f2f2f2"/><circle cx="3.6" cy="11.2" r="1.7" fill="#f4f4f4"/><circle cx="12.3" cy="11.2" r="1.7" fill="#f4f4f4"/></g></svg>
<svg class="a" style="left:465px;top:112px;" width="16" height="15" viewBox="0 0 16 15"><g transform="translate(0 0) scale(0.92)" fill="#dedede" stroke="#8c8c8c" stroke-width="1.08696"><path d="M6.4 0.6h9.2v10.2h-9.2z"/><path d="M6.4 3.6h-3.4l-2.4 3.4v3.8h5.8"/><path d="M1.5 7.5h2.5v-3.4" fill="none"/><rect x="8.6" y="2.6" width="5" height="2.8" fill="#f2f2f2"/><circle cx="3.6" cy="11.2" r="1.7" fill="#f4f4f4"/><circle cx="12.3" cy="11.2" r="1.7" fill="#f4f4f4"/></g><path d="M9.6 8.4l6.2 6.2M15.8 8.4l-6.2 6.2" stroke="#f7f7f7" stroke-width="2.6"/><path d="M9.6 8.4l6.2 6.2M15.8 8.4l-6.2 6.2" stroke="#8e8e8e" stroke-width="0.9"/></svg>
</body></html>
